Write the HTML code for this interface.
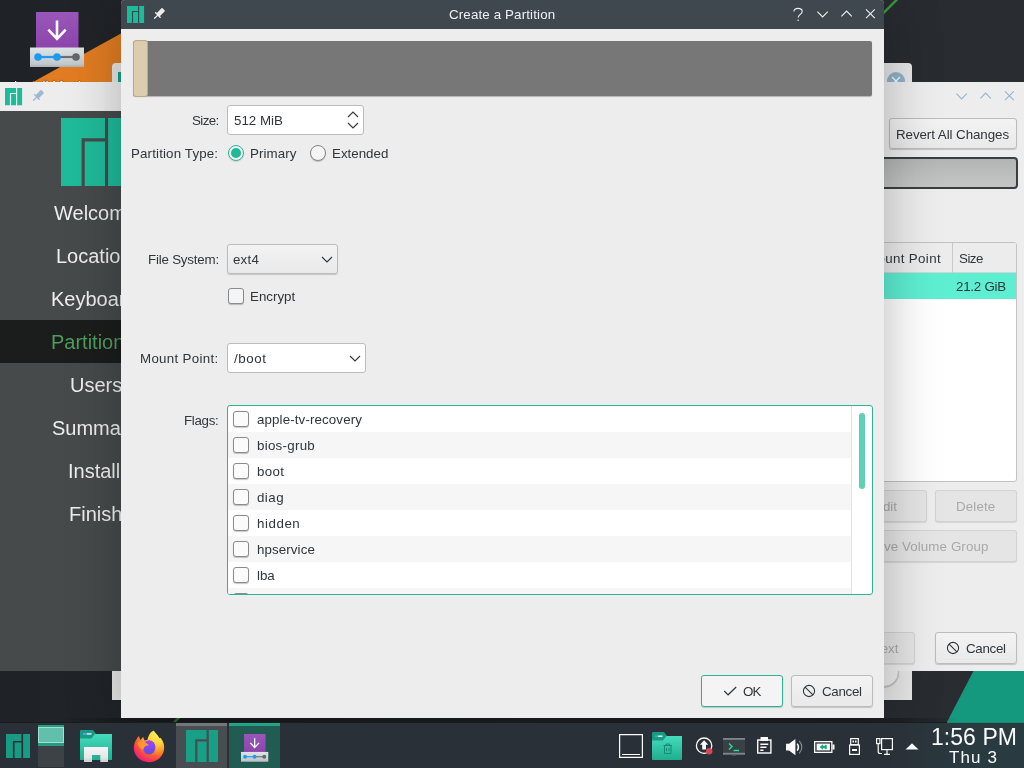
<!DOCTYPE html>
<html lang="en">
<head>
<meta charset="utf-8">
<title>Create a Partition</title>
<style>
*{box-sizing:border-box;margin:0;padding:0}
html,body{width:1024px;height:768px;overflow:hidden;background:#23262b}
body{position:relative;will-change:transform;font-family:"Liberation Sans","DejaVu Sans",sans-serif;font-size:13.33px;line-height:16px;color:#31363b}
.a{position:absolute}
.t{position:absolute;white-space:nowrap;line-height:16px;margin-top:1px}
svg{position:absolute;overflow:visible}
/* ---------- desktop ---------- */
#desk{left:0;top:0;width:1024px;height:768px;background:linear-gradient(90deg,#1f2226,#25282d 40%,#292c31);overflow:hidden}
/* ---------- calamares (behind) ---------- */
#cal{left:0;top:82px;width:1024px;height:589px;background:#ededed;overflow:hidden}
#side{left:0;top:29px;width:193px;height:560px;background:#464a4a}
.sb{position:absolute;white-space:nowrap;font-size:20px;line-height:24px;color:#eeeeee;margin-top:1px}
.btn{position:absolute;border:1px solid #bcbcbc;border-radius:3px;background:linear-gradient(#f3f3f3,#e9e9e9);box-shadow:0 1px 1px rgba(0,0,0,.18)}
.btn.dis{background:#e5e5e5;border-color:#d2d2d2;box-shadow:0 1px 1px rgba(0,0,0,.10);color:#a9a9a9}
/* ---------- dialog ---------- */
#dlg{left:121px;top:0;width:763px;height:718px;background:#ededed;border-radius:4px 4px 0 0;box-shadow:1px 5px 56px 0 rgba(0,0,0,.27)}
#dtb{left:0;top:0;width:763px;height:29px;background:#3f474f;border-radius:4px 4px 0 0}
.cb{position:absolute;width:16px;height:16px;border:1px solid #898c8f;border-radius:3px;background:#f4f4f4;box-shadow:0 1px 1px rgba(0,0,0,.22)}
.row{position:absolute;left:0;width:623px;height:26px}
.row.alt{background:#f6f6f6}
.row .cb{left:5px;top:5px;background:#fbfbfb}
.row .t{left:29px;top:5px}
/* ---------- panel ---------- */
#panel{left:0;top:722px;width:1024px;height:46px;background:linear-gradient(90deg,#2a3037 0,#2a3037 890px,#293a40 965px,#293a40 1024px);border-top:1px solid #191c1f}
</style>
</head>
<body>
<div id="desk" class="a">
  <!-- wallpaper shapes -->
  <svg width="1024" height="768" viewBox="0 0 1024 768">
    <polygon points="33,82 121,33.5 121,82" fill="#e17c22"/>
    <polygon points="947,722 975,668 1024,668 1024,722" fill="#14997f"/>
    <line x1="150" y1="746.5" x2="900" y2="-3.5" stroke="#3b9a3f" stroke-width="2.4"/>
  </svg>
  <svg style="left:30px;top:12.3px" width="54" height="55" viewBox="0 0 54 55"><defs><linearGradient id="gp30" x1="0" y1="0" x2="0" y2="1"><stop offset="0" stop-color="#9858b8"/><stop offset="1" stop-color="#8d44ad"/></linearGradient><linearGradient id="gb30" x1="0" y1="0" x2="0" y2="1"><stop offset="0" stop-color="#dfe3e4"/><stop offset=".85" stop-color="#c3c9cb"/><stop offset="1" stop-color="#a9b0b3"/></linearGradient></defs><rect x="6" y="0" width="42.5" height="36" fill="url(#gp30)"/><path d="M27 27L48.5 48.5V36H36z" fill="#7d3c98" opacity=".45"/><rect x="0" y="35.5" width="54" height="19.5" fill="url(#gb30)"/><path d="M27 8.5V26.5M18.3 17.6L27 26.8l8.7-9.2" fill="none" stroke="#fff" stroke-width="2.6"/><path d="M8 45H27" stroke="#1d99f3" stroke-width="2.2"/><path d="M27 45H46" stroke="#6e6e6e" stroke-width="2.2"/><circle cx="8" cy="45" r="3.8" fill="#1d99f3"/><circle cx="27" cy="45" r="3.8" fill="#1d99f3"/><circle cx="46" cy="45" r="3.8" fill="#666"/></svg>
  <div class="a" style="left:0;top:79px;width:114px;height:3px;overflow:hidden;text-align:center;color:#fcfcfc;font-size:13.33px;line-height:16px;text-shadow:0 0 2px #000"><div style="margin-top:-1px">Install Manjaro</div></div>
</div>

<!-- third window far behind -->
<div id="w3" class="a" style="left:112px;top:63px;width:800px;height:637px;background:#e6e6e6;border-radius:4px 4px 0 0;overflow:hidden">
  <div class="a" style="left:6px;top:9px;width:17px;height:17px;background:#16a085"></div>
  <svg style="left:775px;top:9px" width="18" height="18" viewBox="0 0 18 18"><circle cx="9" cy="9" r="9" fill="#8fb3cb"/><path d="M5 5l8 8M13 5l-8 8" stroke="#fcfcfc" stroke-width="1.2"/></svg>
  <div class="btn" style="left:701px;top:594px;width:86px;height:30px;border-radius:15px;background:#ececec"></div>
</div>

<!-- calamares main window -->
<div id="cal" class="a">
  <!-- title bar -->
  <svg style="left:5.2px;top:5.5px" width="17.1" height="17.2" viewBox="0 0 16 16" preserveAspectRatio="none"><path fill="#1abc9c" d="M0 0h10.3v4.6H4.6V16H0zM5.7 5.7h4.6V16H5.7zM11.4 0H16v16h-4.6z"/></svg>
  <svg style="left:0;top:0" width="1" height="1"><g transform="translate(36.9 15) rotate(45)" fill="#9db8d0"><rect x="-2.2" y="-8" width="4.4" height="8" rx=".8"/><rect x="-3.9" y="-.7" width="7.8" height="1.4" rx=".5"/><rect x="-.650" y="0" width="1.3" height="5.2" rx=".5"/></g></svg>
  <svg style="left:954px;top:6px" width="16" height="16" viewBox="0 0 16 16" fill="none" stroke="#8fb8d6" stroke-width="1.1"><path d="M2.4 5.7L7.6 10.9l5.2-5.2"/></svg>
  <svg style="left:978px;top:6px" width="16" height="16" viewBox="0 0 16 16" fill="none" stroke="#8fb8d6" stroke-width="1.1"><path d="M2.4 10.3L7.6 5.1l5.2 5.2"/></svg>
  <svg style="left:1002px;top:6px" width="16" height="16" viewBox="0 0 16 16" fill="none" stroke="#8fb8d6" stroke-width="1.1"><path d="M3 3.4l8.8 8.8M11.8 3.4l-8.8 8.8"/></svg>

  <!-- sidebar -->
  <div id="side" class="a">
    <svg style="left:61px;top:7px" width="68" height="68" viewBox="0 0 68 68"><path fill="#1fbb9a" d="M0 0h44v20.3H20.6V68H0zM23.7 23.4H44V68H23.7zM47.1 0H68v68H47.1z"/></svg>
    <div class="a" style="left:0;top:209px;width:193px;height:43px;background:#1b1d1d"></div>
    <div class="sb" style="left:54px;top:89px">Welcome</div>
    <div class="sb" style="left:56px;top:132px">Location</div>
    <div class="sb" style="left:51px;top:175px">Keyboard</div>
    <div class="sb" style="left:51px;top:218px;color:#4f9d5d">Partitions</div>
    <div class="sb" style="left:70px;top:261px">Users</div>
    <div class="sb" style="left:52px;top:304px">Summary</div>
    <div class="sb" style="left:68px;top:347px">Install</div>
    <div class="sb" style="left:69px;top:390px">Finish</div>
  </div>

  <!-- right side content -->
  <div class="btn" style="left:889px;top:36px;width:128px;height:31px"></div>
  <div class="t" style="left:896px;top:44px;letter-spacing:-.06px">Revert All Changes</div>
  <div class="a" style="left:700px;top:75px;width:318px;height:32px;border:2px solid #3b3e40;border-radius:4px;background:linear-gradient(#b3b5b5,#c4c6c6)"></div>

  <div class="a" style="left:700px;top:160px;width:317px;height:240px;background:#fff;border:1px solid #c2c2c2;border-radius:3px;overflow:hidden">
    <div class="a" style="left:0;top:0;width:315px;height:30px;background:#ececec;border-bottom:1px solid #d4d4d4"></div>
    <div class="a" style="left:251px;top:0;width:1px;height:30px;background:#c9c9c9"></div>
    <div class="a" style="left:0;top:30px;width:315px;height:26px;background:#5eefd3"></div>
  </div>
  <div class="t" style="left:866px;top:168px;letter-spacing:.35px">Mount Point</div>
  <div class="t" style="left:959px;top:168px;letter-spacing:-.5px">Size</div>
  <div class="t" style="left:956px;top:196px;letter-spacing:-.25px">21.2 GiB</div>

  <div class="btn dis" style="left:800px;top:408px;width:127px;height:32px"></div>
  <div class="t" style="left:874px;top:416px;color:#a9a9a9">Edit</div>
  <div class="btn dis" style="left:935px;top:408px;width:82px;height:32px"></div>
  <div class="t" style="left:956px;top:416px;color:#a9a9a9;letter-spacing:.15px">Delete</div>
  <div class="btn dis" style="left:700px;top:448px;width:317px;height:32px"></div>
  <div class="t" style="left:848px;top:456px;color:#a9a9a9;letter-spacing:.1px">Remove Volume Group</div>

  <div class="btn dis" style="left:833px;top:550px;width:82px;height:32px"></div>
  <div class="t" style="left:871px;top:558px;color:#a9a9a9">Next</div>
  <div class="btn" style="left:935px;top:550px;width:82px;height:32px"></div>
  <svg style="left:946px;top:559px" width="14" height="14" viewBox="0 0 14 14" fill="none" stroke="#31363b" stroke-width="1.1"><circle cx="7" cy="7" r="5.6"/><path d="M3.1 3.1l7.8 7.8"/></svg>
  <div class="t" style="left:966px;top:558px;letter-spacing:-.3px">Cancel</div>
</div>

<!-- dialog -->
<div id="dlg" class="a">
  <div id="dtb" class="a">
    <!-- manjaro icon -->
    <svg style="left:5.5px;top:5.6px" width="17.1" height="17.1" viewBox="0 0 16 16"><path fill="#1abc9c" d="M0 0h10.3v4.6H4.6V16H0zM5.7 5.7h4.6V16H5.7zM11.4 0H16v16h-4.6z"/></svg>
    <!-- pin -->
    <svg style="left:0;top:0" width="1" height="1"><g transform="translate(36.9 15) rotate(45)" fill="#ececec"><rect x="-2.2" y="-8" width="4.4" height="8" rx=".8"/><rect x="-3.9" y="-.7" width="7.8" height="1.4" rx=".5"/><rect x="-.650" y="0" width="1.3" height="5.2" rx=".5"/></g></svg>
    <div class="t" style="left:328px;top:6px;color:#eff0f1;letter-spacing:.14px">Create a Partition</div>
    <!-- title buttons -->
    <svg style="left:670px;top:6px" width="16" height="16" viewBox="0 0 16 16" fill="none" stroke="#eff0f1" stroke-width="1.1"><path d="M2.9 5.6C2.9 3.4 4.6 2.4 7 2.4c2.5 0 4.2 1.2 4.2 3.1 0 2.9-4 2.9-4 6.1"/><circle cx="7.1" cy="14.2" r=".8" fill="#eff0f1" stroke="none"/></svg>
    <svg style="left:694px;top:6px" width="16" height="16" viewBox="0 0 16 16" fill="none" stroke="#eff0f1" stroke-width="1.1"><path d="M2.4 5.7L7.6 10.9l5.2-5.2"/></svg>
    <svg style="left:718px;top:6px" width="16" height="16" viewBox="0 0 16 16" fill="none" stroke="#eff0f1" stroke-width="1.1"><path d="M2.4 10.3L7.6 5.1l5.2 5.2"/></svg>
    <svg style="left:742px;top:6px" width="16" height="16" viewBox="0 0 16 16" fill="none" stroke="#eff0f1" stroke-width="1.1"><path d="M3 3.4l8.8 8.8M11.8 3.4l-8.8 8.8"/></svg>
  </div>

  <!-- partition preview bar -->
  <div class="a" style="left:12px;top:41px;width:739px;height:55px;background:#777;border-radius:2px;box-shadow:0 1px 1px rgba(0,0,0,.25)"></div>
  <div class="a" style="left:12px;top:40px;width:15px;height:57px;background:#dccdb0;border:1px solid #bfa882;border-radius:3px"></div>

  <!-- size row -->
  <div class="t" style="left:71px;top:112px;letter-spacing:-.6px">Size:</div>
  <div class="a" style="left:106px;top:105px;width:137px;height:30px;background:#fff;border:1px solid #bdbdbd;border-radius:3px"></div>
  <div class="t" style="left:113px;top:112px">512 MiB</div>
  <svg style="left:226px;top:109px" width="12" height="22" viewBox="0 0 12 22" fill="none" stroke="#31363b" stroke-width="1.1"><path d="M1 8l5-5 5 5M1 14l5 5 5-5"/></svg>

  <!-- partition type -->
  <div class="t" style="left:10px;top:145px;letter-spacing:.15px">Partition Type:</div>
  <div class="a" style="left:107px;top:145px;width:16px;height:16px;border-radius:50%;border:1px solid #2eb398;background:#f1f1f1;box-shadow:0 1px 1px rgba(0,0,0,.12)"><div class="a" style="left:2px;top:2px;width:10px;height:10px;border-radius:50%;background:#20b896"></div></div>
  <div class="t" style="left:129px;top:145px;letter-spacing:.1px">Primary</div>
  <div class="a" style="left:189px;top:145px;width:16px;height:16px;border-radius:50%;border:1px solid #84878a;background:#f4f4f4;box-shadow:0 1px 1px rgba(0,0,0,.2)"></div>
  <div class="t" style="left:211px;top:145px">Extended</div>

  <!-- file system -->
  <div class="t" style="left:27px;top:251px;letter-spacing:-.2px">File System:</div>
  <div class="btn" style="left:106px;top:244px;width:111px;height:30px"></div>
  <div class="t" style="left:112px;top:251px;letter-spacing:.2px">ext4</div>
  <svg style="left:200px;top:255px" width="12" height="10" viewBox="0 0 12 10" fill="none" stroke="#31363b" stroke-width="1.1"><path d="M1 2l5 5 5-5"/></svg>
  <div class="cb" style="left:107px;top:288px"></div>
  <div class="t" style="left:129px;top:288px">Encrypt</div>

  <!-- mount point -->
  <div class="t" style="left:19px;top:350px;letter-spacing:.3px">Mount Point:</div>
  <div class="a" style="left:106px;top:343px;width:139px;height:30px;background:#fff;border:1px solid #bdbdbd;border-radius:3px"></div>
  <div class="t" style="left:113px;top:350px;letter-spacing:.6px">/boot</div>
  <svg style="left:228px;top:354px" width="12" height="10" viewBox="0 0 12 10" fill="none" stroke="#31363b" stroke-width="1.1"><path d="M1 2l5 5 5-5"/></svg>

  <!-- flags -->
  <div class="t" style="left:63px;top:412px;letter-spacing:-.3px">Flags:</div>
  <div class="a" id="flags" style="left:106px;top:405px;width:646px;height:190px;background:#fff;border:1px solid #2eb398;border-radius:3px;overflow:hidden">
    <div class="row" style="top:0"><div class="cb"></div><div class="t" style="letter-spacing:.12px">apple-tv-recovery</div></div>
    <div class="row alt" style="top:26px"><div class="cb"></div><div class="t" style="letter-spacing:.27px">bios-grub</div></div>
    <div class="row" style="top:52px"><div class="cb"></div><div class="t" style="letter-spacing:.34px">boot</div></div>
    <div class="row alt" style="top:78px"><div class="cb"></div><div class="t" style="letter-spacing:.45px">diag</div></div>
    <div class="row" style="top:104px"><div class="cb"></div><div class="t" style="letter-spacing:.55px">hidden</div></div>
    <div class="row alt" style="top:130px"><div class="cb"></div><div class="t" style="letter-spacing:.1px">hpservice</div></div>
    <div class="row" style="top:156px"><div class="cb"></div><div class="t">lba</div></div>
    <div class="row alt" style="top:182px"><div class="cb"></div><div class="t">legacy_boot</div></div>
    <div class="a" style="left:623px;top:0;width:1px;height:188px;background:#e3e3e3"></div>
    <div class="a" style="left:631px;top:7px;width:6px;height:76px;border-radius:3px;background:#5fcfb6"></div>
  </div>

  <!-- buttons -->
  <div class="btn" style="left:580px;top:675px;width:82px;height:32px;border-color:#2eb398;background:#f4f4f4"></div>
  <svg style="left:602px;top:684px" width="14" height="12" viewBox="0 0 14 12" fill="none" stroke="#31363b" stroke-width="1.2"><path d="M1.3 7l3.8 3.8L13.2 3"/></svg>
  <div class="t" style="left:622px;top:683px;letter-spacing:-.8px">OK</div>
  <div class="btn" style="left:670px;top:675px;width:82px;height:32px"></div>
  <svg style="left:681px;top:684px" width="14" height="14" viewBox="0 0 14 14" fill="none" stroke="#31363b" stroke-width="1.1"><circle cx="7" cy="7" r="5.6"/><path d="M3.1 3.1l7.8 7.8"/></svg>
  <div class="t" style="left:701px;top:683px;letter-spacing:-.3px">Cancel</div>
</div>

<div class="a" style="left:60px;top:718px;width:900px;height:4px;background:linear-gradient(90deg,transparent,rgba(0,0,0,.28) 60px,rgba(0,0,0,.28) 840px,transparent)"></div>
<!-- panel -->
<div id="panel" class="a">
  <div class="a" style="left:947px;top:-1px;width:77px;height:1px;background:#188a73"></div>
  <!-- launcher -->
  <svg style="left:6px;top:11px" width="24" height="24" viewBox="0 0 16 16"><path fill="#179c83" d="M0 0h10.3v4.6H4.6V16H0zM5.7 5.7h4.6V16H5.7zM11.4 0H16v16h-4.6z"/></svg>
  <!-- pager -->
  <div class="a" style="left:38px;top:2px;width:26px;height:21px;background:#2a9a83"><div class="a" style="left:0;top:2px;width:26px;height:16px;background:#60c0ab;border:1px solid #a3dfd1"></div></div>
  <div class="a" style="left:38px;top:23px;width:26px;height:21px;background:#3d4246"></div>
  <!-- file manager -->
  <svg style="left:80px;top:7px" width="32" height="32" viewBox="0 0 32 32"><defs><linearGradient id="gw" x1="0" y1="0" x2="0" y2="1"><stop offset="0" stop-color="#f6f6f6"/><stop offset=".7" stop-color="#e6e6e6"/><stop offset="1" stop-color="#cdcdcd"/></linearGradient><linearGradient id="gf" x1="0" y1="0" x2="0" y2="1"><stop offset="0" stop-color="#44dcbc"/><stop offset="1" stop-color="#1fae8f"/></linearGradient></defs><path d="M0 1.2Q0 0 1.2 0H13L16 4H32V30H0z" fill="#179c83"/><path d="M0 8.5H11.5L15 4H32V29Q32 30 31 30H1Q0 30 0 29z" fill="url(#gf)"/><rect x="3" y="3" width="4" height="1.8" fill="#4ea7ee"/><rect x="7" y="3" width="4.5" height="1.8" fill="#cfd6d8"/><path d="M4 17H28V32H20.3V25H12V32H4z" fill="url(#gw)"/></svg>
  <!-- firefox -->
  <svg style="left:133px;top:6px" width="32" height="34" viewBox="0 0 32 34"><defs><radialGradient id="gx" cx=".78" cy=".1" r="1.05"><stop offset="0" stop-color="#fff45a"/><stop offset=".28" stop-color="#ffd83e"/><stop offset=".5" stop-color="#ff9c2c"/><stop offset=".68" stop-color="#ff5d33"/><stop offset=".86" stop-color="#f72d63"/><stop offset="1" stop-color="#e21a96"/></radialGradient><linearGradient id="gg" x1="0" y1="0" x2="0" y2="1"><stop offset="0" stop-color="#b13df2"/><stop offset=".55" stop-color="#7b4af0"/><stop offset="1" stop-color="#5a4fd8"/></linearGradient></defs><path d="M20.5 1.6C22.5 4 24.5 6 26 8.5 26.6 9.3 27 9.6 27.5 8.8 29.8 11.5 31.2 15 31.2 18.5 31.2 26.8 24.5 33.2 16 33.2 7.5 33.2.8 26.8.8 18.8.8 16 1.6 13.2 3 11 3.8 9.5 5 8 6 7 6.2 8.5 6.8 10 7.6 11 8.3 9.8 9.3 8.8 10.3 8 10.4 9.3 10.9 10.5 11.6 11.5 12.5 11 13.5 10.8 14.3 10.9 14.8 9 15.5 7 16.5 5.2 17.5 3.8 19 2.5 20.5 1.6z" fill="url(#gx)"/><ellipse cx="16.2" cy="18.4" rx="6.2" ry="7.2" fill="url(#gg)"/><path d="M4.5 13.5C7 12 10.5 12.2 12.5 13.5 13.8 14.4 14.8 15.3 16 16.2 14.3 16.4 13 16.8 12 17.6 11 18.5 10.3 19.6 10 21 7.5 20 5 17.5 4.5 13.5z" fill="#ff9a2a"/><path d="M18 12.2C19.5 12 21 12.5 22 13.2 21 13.5 20.2 14 19.8 14.8 19.4 13.8 18.8 12.8 18 12.2z" fill="#ffb02e" opacity=".0"/></svg>
  <!-- tasks -->
  <div class="a" style="left:176px;top:0;width:51px;height:45px;background:#484d52;border-top:3px solid #73777b"></div>
  <svg style="left:186px;top:7px" width="32" height="32" viewBox="0 0 16 16"><path fill="#17a085" d="M0 0h10.3v4.6H4.6V16H0zM5.7 5.7h4.6V16H5.7zM11.4 0H16v16h-4.6z"/></svg>
  <div class="a" style="left:229px;top:0;width:51px;height:45px;background:#215b52;border-top:3px solid #20a386"></div>
  <svg style="left:241.4px;top:10.6px" width="27.3" height="27.8056" viewBox="0 0 54 55"><defs><linearGradient id="gp241" x1="0" y1="0" x2="0" y2="1"><stop offset="0" stop-color="#9858b8"/><stop offset="1" stop-color="#8d44ad"/></linearGradient><linearGradient id="gb241" x1="0" y1="0" x2="0" y2="1"><stop offset="0" stop-color="#dfe3e4"/><stop offset=".85" stop-color="#c3c9cb"/><stop offset="1" stop-color="#a9b0b3"/></linearGradient></defs><rect x="6" y="0" width="42.5" height="36" fill="url(#gp241)"/><path d="M27 27L48.5 48.5V36H36z" fill="#7d3c98" opacity=".45"/><rect x="0" y="35.5" width="54" height="19.5" fill="url(#gb241)"/><path d="M27 8.5V26.5M18.3 17.6L27 26.8l8.7-9.2" fill="none" stroke="#fff" stroke-width="2.6"/><path d="M8 45H27" stroke="#1d99f3" stroke-width="2.2"/><path d="M27 45H46" stroke="#6e6e6e" stroke-width="2.2"/><circle cx="8" cy="45" r="3.8" fill="#1d99f3"/><circle cx="27" cy="45" r="3.8" fill="#1d99f3"/><circle cx="46" cy="45" r="3.8" fill="#666"/></svg>
  <!-- show desktop -->
  <div class="a" style="left:619px;top:11px;width:24px;height:24px;border:1px solid #fcfcfc;box-shadow:inset 0 0 0 .2px #fcfcfc"><div class="a" style="left:2px;top:19px;width:18px;height:1px;background:#fcfcfc"></div></div>
  <!-- trash folder -->
  <svg style="left:652px;top:9px" width="30" height="28" viewBox="0 0 30 28"><defs><linearGradient id="gt" x1="0" y1="0" x2="0" y2="1"><stop offset="0" stop-color="#44dcbc"/><stop offset="1" stop-color="#1fae8f"/></linearGradient></defs><path d="M0 1.2Q0 0 1.2 0H12L15 4H30V27H0z" fill="#179c83"/><path d="M0 8.5H11L14.5 4H30V27Q30 28 29 28H1Q0 28 0 27z" fill="url(#gt)"/><rect x="3" y="3.5" width="3" height="1.4" fill="#3daee9"/><rect x="6" y="3.5" width="4.5" height="1.4" fill="#f2f2f2"/><g fill="none" stroke="#168a72" stroke-width="1"><path d="M11.5 13.5H20M12.5 13.5V21.5H19V13.5M14 13.5V12H17.5V13.5M14.5 16V19M17 16V19"/></g></svg>
  <!-- updates -->
  <svg style="left:695px;top:13.3px" width="20" height="20" viewBox="0 0 20 20"><circle cx="9.1" cy="9.7" r="7.7" fill="none" stroke="#fcfcfc" stroke-width="1.3"/><path d="M9.1 4.2L13.3 8.8H11V13.5H7.2V8.8H4.9z" fill="#fcfcfc"/><circle cx="14.2" cy="15.2" r="3.2" fill="#da4453"/></svg>
  <!-- terminal -->
  <svg style="left:723px;top:14.5px" width="22" height="18" viewBox="0 0 22 18"><rect x="0" y="0" width="22" height="17" fill="#3b4045"/><rect x="0" y="0" width="22" height="1.8" fill="#80858a"/><rect x="0" y="14.8" width="22" height="1.8" fill="#80858a"/><rect x="9" y="16.6" width="4" height="1" fill="#5a5f64"/><path d="M6 5.5L9 8.5L6 11.5M6 5.5L9 8.5" fill="none" stroke="#1cdc9a" stroke-width="1.5"/><path d="M10.5 12.5H16" stroke="#1cdc9a" stroke-width="1.5"/></svg>
  <!-- clipboard -->
  <svg style="left:757px;top:14.2px" width="15" height="17" viewBox="0 0 15 17"><rect x=".700" y="3" width="13.2" height="13" fill="none" stroke="#fcfcfc" stroke-width="1.4"/><rect x="3.5" y="0" width="7.5" height="4" fill="#fcfcfc"/><path d="M3.3 7.2H11.3M3.3 10.2H9.5M3.3 13.2H6.5" stroke="#fcfcfc" stroke-width="1.5"/></svg>
  <!-- speaker -->
  <svg style="left:785.5px;top:16px" width="18" height="17" viewBox="0 0 18 17"><path d="M0 4.7H3L9.4 0V16.2L3 11.5H0z" fill="#fcfcfc"/><path d="M11.2 4.6Q13.6 8.1 11.2 11.6" fill="none" stroke="#fcfcfc" stroke-width="1.6"/><path d="M13.2 1.8Q18.6 8.1 13.2 14.4" fill="none" stroke="#8a8e92" stroke-width="1.1"/></svg>
  <!-- battery -->
  <svg style="left:814px;top:18px" width="21" height="12" viewBox="0 0 21 12"><rect x=".650" y=".650" width="17.2" height="10.7" fill="none" stroke="#fcfcfc" stroke-width="1.3"/><rect x="18.5" y="3.5" width="2" height="5" fill="#fcfcfc"/><rect x="2.6" y="2.6" width="13.3" height="6.8" fill="#fcfcfc"/><path d="M5.5 6L9 3.3V4.8H12.5V7.2H9V8.7z" fill="#1aa889"/><rect x="11" y="3.8" width="1.6" height="4.4" fill="#1aa889"/></svg>
  <!-- usb -->
  <svg style="left:849px;top:15px" width="11" height="17" viewBox="0 0 11 17"><rect x="1.7" y=".600" width="7.6" height="6" fill="none" stroke="#fcfcfc" stroke-width="1.2"/><rect x="3.5" y="2.5" width="1.5" height="2" fill="#fcfcfc"/><rect x="6" y="2.5" width="1.5" height="2" fill="#fcfcfc"/><rect x=".600" y="7" width="9.8" height="9.4" fill="none" stroke="#fcfcfc" stroke-width="1.2"/><rect x="3" y="11" width="5" height="2" fill="#fcfcfc"/></svg>
  <!-- network -->
  <svg style="left:876px;top:15px" width="17" height="17" viewBox="0 0 17 17"><rect x="5.6" y=".600" width="10.8" height="11" fill="none" stroke="#fcfcfc" stroke-width="1.2"/><path d="M8 16.4H14M11 11.6V16.4" stroke="#fcfcfc" stroke-width="1.2"/><rect x=".600" y=".600" width="3.3" height="5" fill="none" stroke="#fcfcfc" stroke-width="1.2"/><path d="M2.2 5.6V13.5Q2.2 15.5 4.2 15.5H6" fill="none" stroke="#fcfcfc" stroke-width="1.2"/></svg>
  <!-- expander -->
  <svg style="left:905px;top:20px" width="14" height="7" viewBox="0 0 14 7"><path d="M0.5 6.5L7 0.3L13.5 6.5z" fill="#fcfcfc"/></svg>
  <!-- clock -->
  <div class="a" style="left:931px;top:1px;white-space:nowrap;font-size:23px;line-height:26px;color:#fcfcfc;letter-spacing:.05px" id="clk1">1:56 PM</div>
  <div class="a" style="left:949px;top:26px;white-space:nowrap;font-size:17px;line-height:18px;color:#fcfcfc;letter-spacing:1.1px" id="clk2">Thu 3</div>
</div>
</body>
</html>
